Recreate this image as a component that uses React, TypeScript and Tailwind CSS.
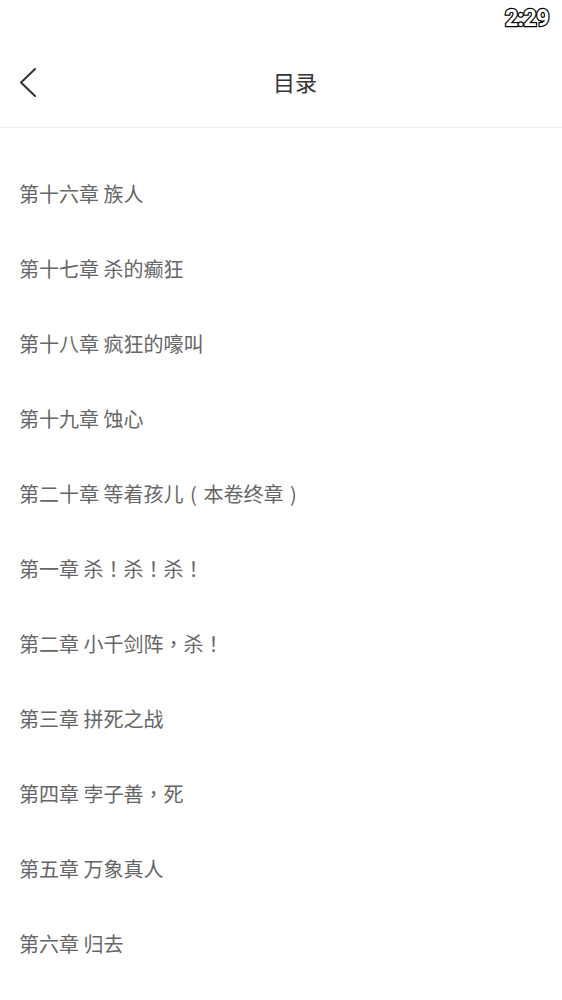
import React from "react";

const chapters: string[] = [
  "第十六章 族人",
  "第十七章 杀的癫狂",
  "第十八章 疯狂的嚎叫",
  "第十九章 蚀心",
  "第二十章 等着孩儿（本卷终章）",
  "第一章 杀！杀！杀！",
  "第二章 小千剑阵，杀！",
  "第三章 拼死之战",
  "第四章 孛子善，死",
  "第五章 万象真人",
  "第六章 归去",
];

// full-width punctuation sits centred in a full em cell
const renderTitle = (title: string) =>
  title.split(/([！，（）])/).map((part, i) => {
    if (part === "（" || part === "）") {
      return (
        <span key={i} className="inline-block w-[1em] text-center">
          {part === "（" ? "(" : ")"}
        </span>
      );
    }
    if (part === "！" || part === "，") {
      return (
        <span key={i} className="font-['Noto_Sans_CJK_TC',sans-serif]">
          {part}
        </span>
      );
    }
    return part;
  });

export default function App() {
  return (
    <div className="w-[562px] h-[1000px] overflow-hidden bg-white font-['Noto_Sans_CJK_SC','Noto_Sans',sans-serif]">
      {/* status bar */}
      <div className="h-[36px] flex items-center justify-end pr-[13px]">
        <span className="text-[23px] font-bold leading-none text-white font-['Roboto',sans-serif] tracking-[-0.5px] [-webkit-text-stroke:2.5px_black] [paint-order:stroke_fill]">
          2:29
        </span>
      </div>

      {/* header */}
      <div className="relative h-[92px] flex items-center justify-center pl-[28px] border-b border-[#f0f0f0]">
        <button className="absolute left-[16px] top-[30px] w-[24px] h-[32px] flex items-center justify-center">
          <svg width="20" height="30" viewBox="0 0 20 30" fill="none">
            <polyline
              points="17,2 3,15.5 17,29"
              stroke="#333"
              strokeWidth="2"
              strokeLinecap="round"
              strokeLinejoin="round"
            />
          </svg>
        </button>
        <h1 className="text-[22px] text-[#333] leading-none -mt-[2px]">目录</h1>
      </div>

      {/* chapter list */}
      <ul className="pt-[28px]">
        {chapters.map((title) => (
          <li
            key={title}
            className="h-[75px] flex items-center px-[19px] text-[20px] text-[#666] leading-none"
          >
            <span>{renderTitle(title)}</span>
          </li>
        ))}
      </ul>
    </div>
  );
}
